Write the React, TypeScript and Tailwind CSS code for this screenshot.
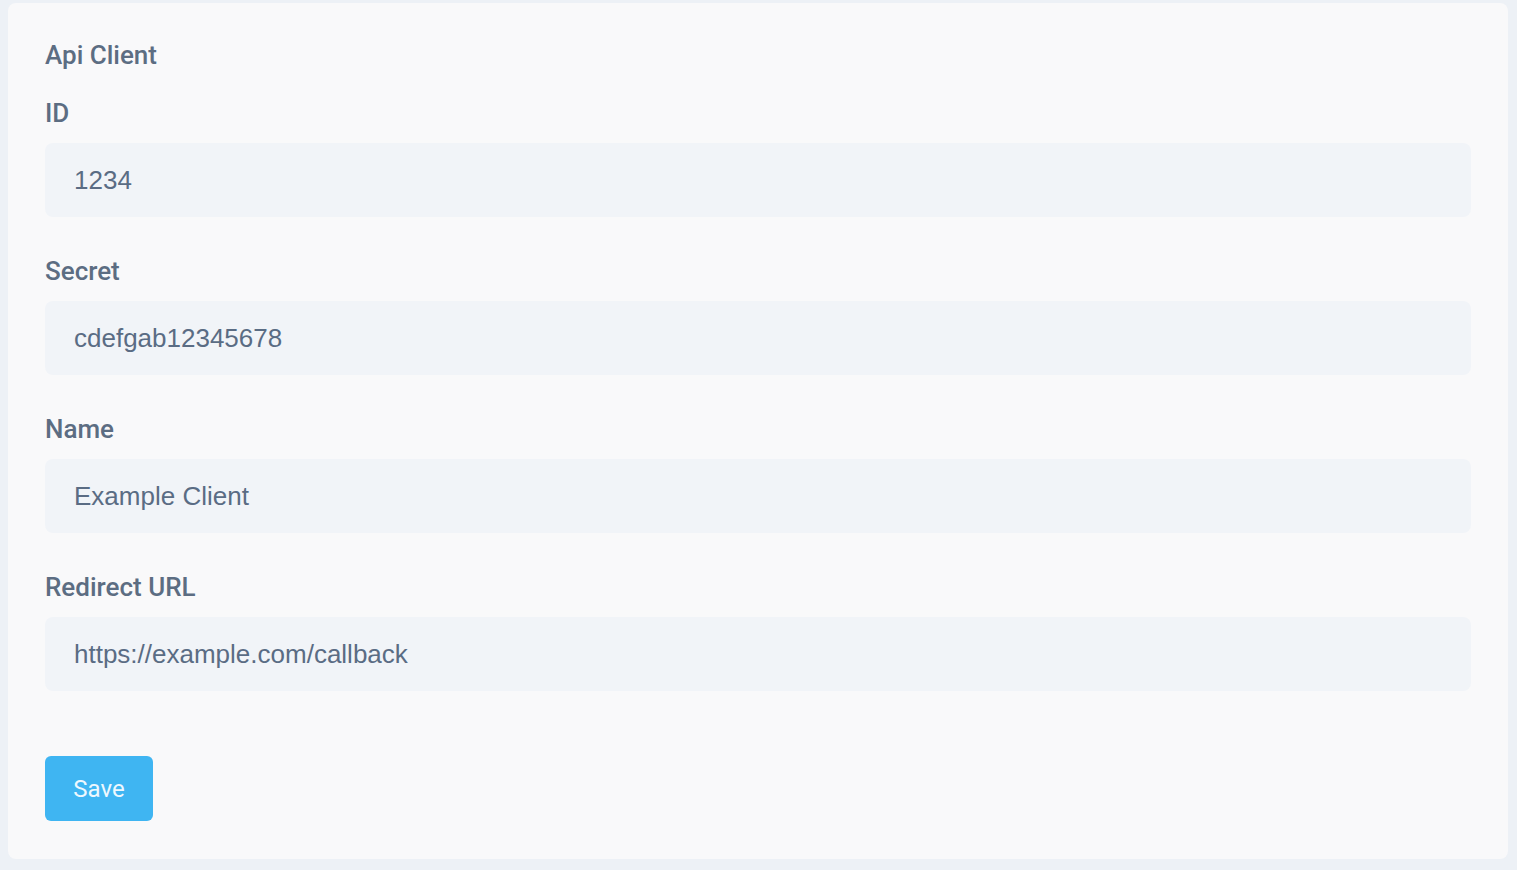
import React from "react";

const fields = [
  { label: "ID", value: "1234" },
  { label: "Secret", value: "cdefgab12345678" },
  { label: "Name", value: "Example Client" },
  { label: "Redirect URL", value: "https://example.com/callback" },
];

export default function App() {
  return (
    <div className="min-h-[870px] w-full bg-[#edf1f6] pt-[3px] pl-2 pr-[9px] pb-[11px]">
      <div
        className="rounded-lg bg-[#f9f9fa] px-[37px] pt-[37px] pb-[38px]"
        style={{ fontFamily: "Roboto, 'Liberation Sans', sans-serif" }}
      >
        <h1 className="h-[30px] text-[26px] font-medium leading-[30px] text-[#5c6d82]">Api Client</h1>
        <div className="mt-[28px] flex flex-col gap-[39px]">
          {fields.map((f) => (
            <div key={f.label} className="flex flex-col">
              <label className="h-[30px] text-[26px] font-medium leading-[30px] text-[#5c6d82]">{f.label}</label>
              <div
                className="mt-[15px] flex h-[74px] items-center rounded-lg bg-[#f1f4f8] px-[29px] text-[26px] text-[#5a6c84]"
                style={{ fontFamily: "'Liberation Sans', Arial, sans-serif" }}
              >
                {f.value}
              </div>
            </div>
          ))}
        </div>
        <button className="mt-[65px] flex h-[65px] w-[108px] items-center justify-center rounded-md bg-[#3fb5f2] text-[24px] text-[#eef8fe]">
          Save
        </button>
      </div>
    </div>
  );
}
